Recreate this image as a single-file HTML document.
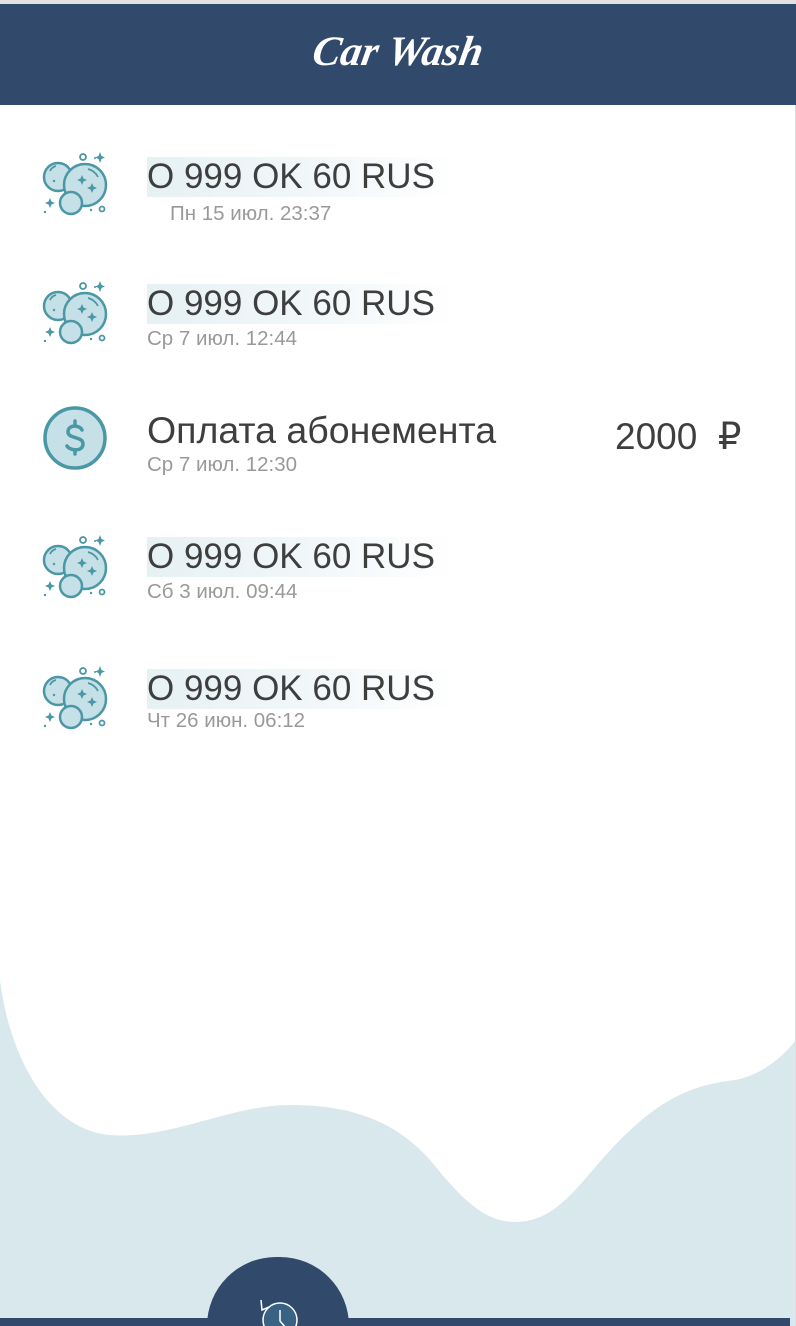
<!DOCTYPE html>
<html><head><meta charset="utf-8"><style>
*{margin:0;padding:0;box-sizing:border-box}
html,body{width:796px;height:1326px;overflow:hidden}
body{background:#d9e8ed;font-family:"Liberation Sans","DejaVu Sans",sans-serif;position:relative}
#w{position:absolute;left:0;top:0;width:796px;height:1326px;overflow:hidden}
.top{position:absolute;left:0;top:0;width:796px;height:4px;background:#e2e2e2}
.hdr{position:absolute;left:0;top:4px;width:796px;height:101px;background:#314a6b;color:#fff;text-align:center}
.hdr span{display:inline-block;margin-top:24px;font-family:"Liberation Serif",serif;font-style:italic;font-weight:bold;font-size:42px;transform:skewX(-10deg)}
svg.bg{position:absolute;left:0;top:0}
.ic{position:absolute;left:42px;overflow:visible}
.t{position:absolute;left:147px;font-size:35px;color:#3e3e3e;line-height:40px;padding-right:20px;background:linear-gradient(90deg,#e6f1f4,#f3f8fa 60%,rgba(255,255,255,0));white-space:nowrap}
.d{position:absolute;left:147px;font-size:20.5px;color:#999;white-space:nowrap}
.amt{position:absolute;left:615px;top:415px;font-size:37px;color:#3e3e3e;white-space:pre}
.bar{position:absolute;left:0;top:1318px;width:790px;height:8px;background:#314a6b}
.circ{position:absolute;left:207px;top:1257px;width:142px;height:69px;border-radius:71px 71px 0 0/71px 71px 0 0;background:#314a6b}
.rl{position:absolute;left:795px;top:105px;width:1px;height:1221px;background:#ddd}
</style></head><body><div id="w">
<svg class="bg" width="796" height="1326"><path d="M0 105 H796 V1040 C780 1060 760 1075 735 1080 C690 1085 660 1100 620 1140 C580 1180 560 1222 515 1222 C480 1222 455 1190 430 1160 C390 1115 340 1105 290 1105 C230 1105 170 1140 110 1135 C50 1130 10 1060 0 980 Z" fill="#fff"/></svg>
<div class="top"></div>
<div class="hdr"><span>Car Wash</span></div>
<div class="rl"></div>

<svg width="0" height="0" style="position:absolute"><defs>
<g id="bub" fill="#c5e0e6" stroke="#4a97a5" stroke-width="2.5">
<circle cx="16" cy="25" r="14"/>
<circle cx="43" cy="33" r="21"/>
<path d="M8 19 A9 9 0 0 1 14 14 M46 17 A16 16 0 0 1 56 25" fill="none" stroke-width="1.8"/>
<circle cx="29" cy="51" r="11"/>
<circle cx="41" cy="5" r="3" fill="none" stroke-width="1.8"/>
<circle cx="60" cy="57" r="2.5" fill="none" stroke-width="1.8"/>
<path d="M58 0 L59.5 4 L63 5.5 L59.5 7 L58 11 L56.5 7 L53 5.5 L56.5 4Z M40 23 L41.5 26.5 L45 28 L41.5 29.5 L40 33 L38.5 29.5 L35 28 L38.5 26.5Z M50 31 L51.5 34.5 L55 36 L51.5 37.5 L50 41 L48.5 37.5 L45 36 L48.5 34.5Z M8 46 L9.5 49.5 L13 51 L9.5 52.5 L8 56 L6.5 52.5 L3 51 L6.5 49.5Z" fill="#4a97a5" stroke="none"/>
<circle cx="3" cy="60" r="1.2" fill="#4a97a5" stroke="none"/>
<circle cx="12" cy="29" r="1.2" fill="#4a97a5" stroke="none"/>
<circle cx="53" cy="6" r="1" fill="#4a97a5" stroke="none"/>
<circle cx="49" cy="58" r="1.2" fill="#4a97a5" stroke="none"/>
</g></defs></svg>

<svg class="ic" style="top:152px" width="68" height="66"><use href="#bub"/></svg>
<div class="t" style="top:157px">O 999 OK 60 RUS</div>
<div class="d" style="top:202px;left:170px">Пн 15 июл. 23:37</div>

<svg class="ic" style="top:281px" width="68" height="66"><use href="#bub"/></svg>
<div class="t" style="top:284px">O 999 OK 60 RUS</div>
<div class="d" style="top:327px">Ср 7 июл. 12:44</div>

<svg class="ic" style="top:406px" width="66" height="64"><circle cx="33" cy="32" r="30" fill="#c5e0e6" stroke="#4a97a5" stroke-width="3.5"/><path d="M40 24 C38 19 26 18 26 26 C26 33 41 30 41 38 C41 46 28 45 25 40 M33 15 V19 M33 44 V48" fill="none" stroke="#4a97a5" stroke-width="3.5" stroke-linecap="round"/></svg>
<div class="t" style="top:410px;background:none;font-size:37.5px">Оплата абонемента</div>
<div class="d" style="top:453px">Ср 7 июл. 12:30</div>
<div class="amt">2000  ₽</div>

<svg class="ic" style="top:535px" width="68" height="66"><use href="#bub"/></svg>
<div class="t" style="top:537px">O 999 OK 60 RUS</div>
<div class="d" style="top:580px">Сб 3 июл. 09:44</div>

<svg class="ic" style="top:666px" width="68" height="66"><use href="#bub"/></svg>
<div class="t" style="top:669px">O 999 OK 60 RUS</div>
<div class="d" style="top:709px">Чт 26 июн. 06:12</div>

<div class="circ"></div>
<div class="bar"></div>
<svg style="position:absolute;left:256px;top:1298px" width="50" height="28"><circle cx="24" cy="22" r="17" fill="#3a6283" stroke="#fff" stroke-width="1.5"/><path d="M24 12 V23 L30 30" stroke="#fff" stroke-width="1.5" fill="none"/><path d="M5 2 L6 12 L13 9" stroke="#fff" stroke-width="1.5" fill="none"/></svg>
</div></body></html>
